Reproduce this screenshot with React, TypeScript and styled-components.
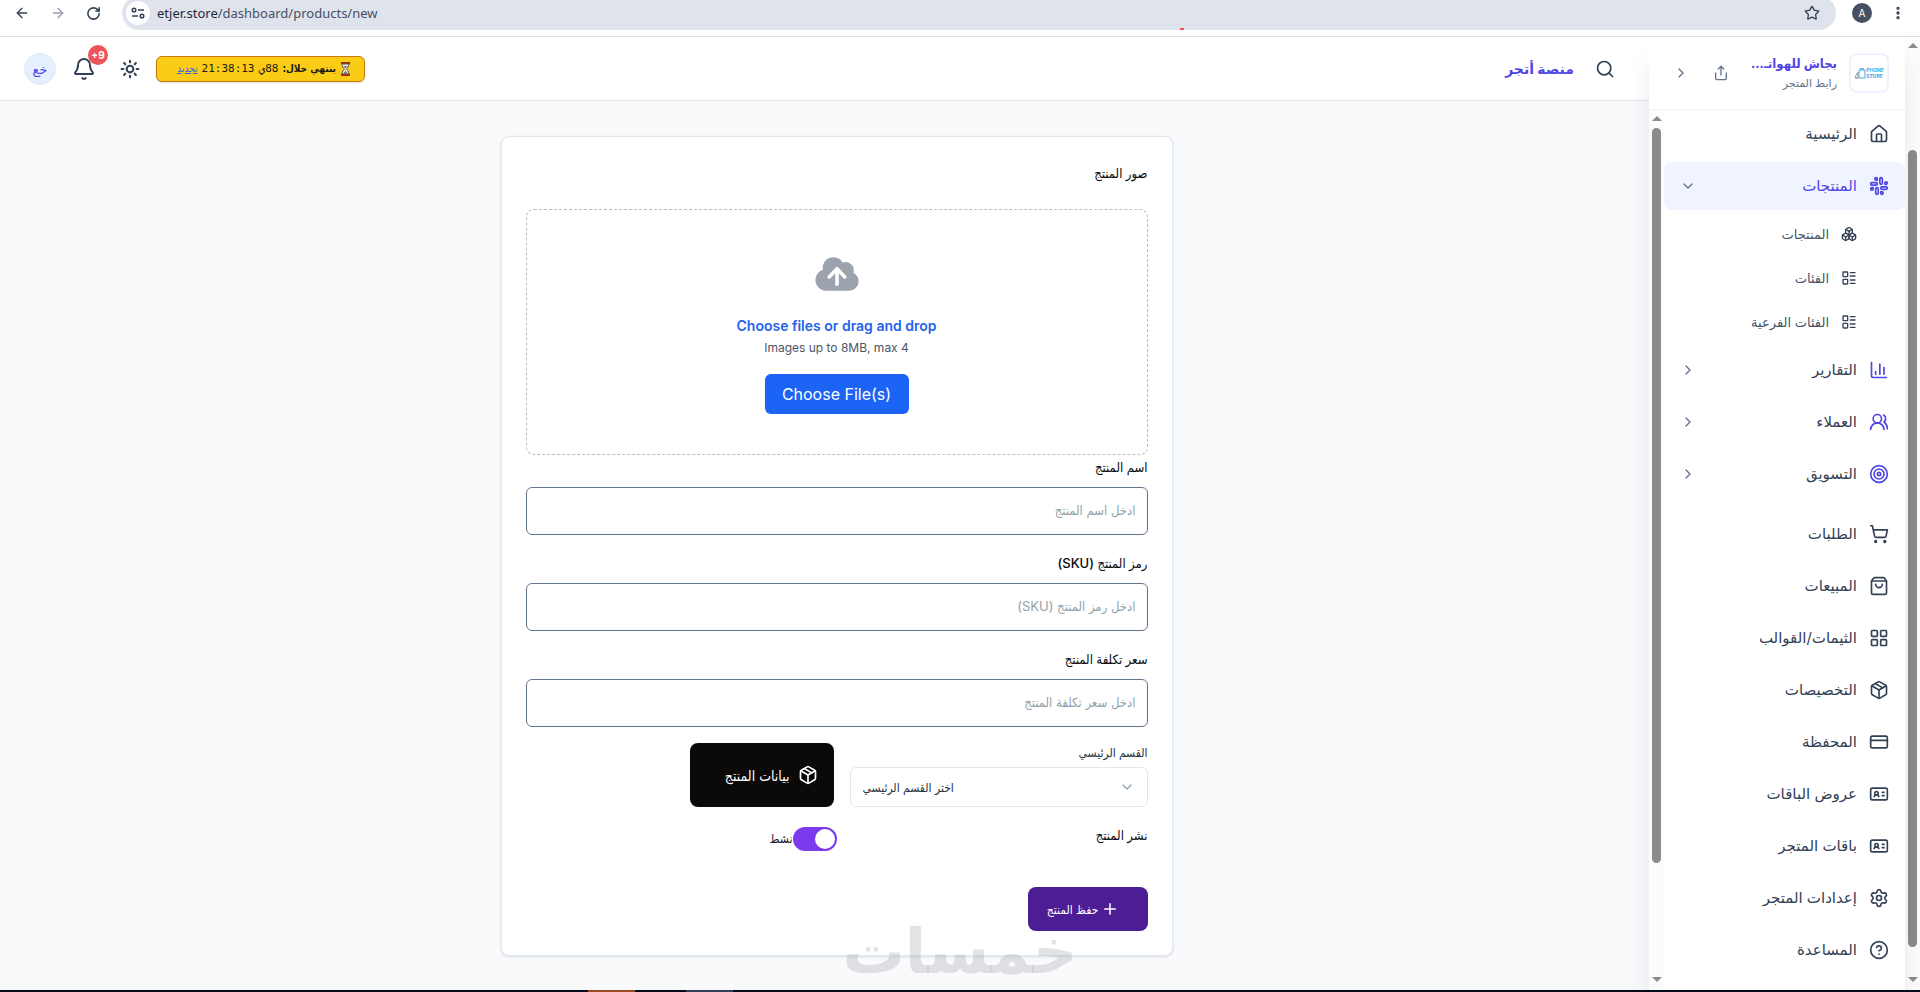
import React from "react";
import styled, { createGlobalStyle, css } from "styled-components";
import {
  ArrowLeft, ArrowRight, RotateCw, Star, EllipsisVertical, Bell, Sun, Search, Share, ChevronRight, ChevronDown,
  House, Slack, Boxes, LayoutList, ChartColumn, UsersRound, Target, ShoppingCart, ShoppingBag, LayoutGrid,
  Package, CreditCard, IdCard, Settings, CircleQuestionMark, Plus,
} from "lucide-react";

const ink = "#334155";
const brand = "#4f46e5";
const bodyFont = `Inter, "DejaVu Sans", sans-serif`;
const formFont = `Inter, "DejaVu Sans Condensed", "DejaVu Sans", sans-serif`;

const GlobalStyle = createGlobalStyle`
  *, *::before, *::after { box-sizing: border-box; }
  body { margin: 0; background: #f8fafc; font-family: ${bodyFont}; color: #0f172a; }
  button, input, select { font: inherit; }
  button { border: 0; background: none; padding: 0; cursor: pointer; color: inherit; }
  a { color: inherit; text-decoration: none; }
  svg { display: block; flex: none; }
`;

const Page = styled.div`
  position: relative;
  min-height: 100vh;
  display: flex;
  flex-direction: column;
`;

/* Browser toolbar */
const Toolbar = styled.div`
  direction: ltr;
  height: 37px;
  overflow: hidden;
  background: #fff;
  border-bottom: 1px solid #dcdee2;
`;
const ToolbarRow = styled.div`
  height: 34px;
  margin-top: -4px;
  display: flex;
  align-items: center;
  color: ${ink};
  padding: 0 14px 0 14px;
`;
const ToolButton = styled.button<{ $dim?: boolean }>`
  width: 17px;
  margin-right: 19px;
  color: ${(p) => (p.$dim ? "#9aa1ac" : ink)};
`;
const Omnibox = styled.div`
  position: relative;
  flex: 1;
  height: 34px;
  margin-right: 16px;
  padding: 0 16px 0 4px;
  display: flex;
  align-items: center;
  gap: 7px;
  border-radius: 17px;
  background: #dfe3ec;
  &::after {
    content: "";
    position: absolute;
    right: 652px;
    bottom: 0;
    width: 4px;
    height: 2px;
    background: #f05252;
  }
`;
const SiteInfo = styled.button`
  width: 24px;
  height: 24px;
  display: grid;
  place-items: center;
  border-radius: 50%;
  background: #fff;
`;
const Address = styled.span`
  flex: 1;
  font: 13px/20px "Noto Sans", sans-serif;
  color: #475063;
  b { font-weight: 400; color: #1f2937; }
`;
const Profile = styled.button`
  width: 20px;
  height: 20px;
  margin-right: 18px;
  border-radius: 50%;
  background: #475063;
  color: #fff;
  font: 10px/20px Inter, sans-serif;
`;

/* Shell */
const Shell = styled.div`
  flex: 1;
  display: flex;
`;
const Track = styled.div`
  width: 15px;
  flex: none;
  display: flex;
  flex-direction: column;
  align-items: center;
  padding: 6px 0 8px;
  background: #fcfcfa;
`;
const Arrow = styled.span<{ $down?: boolean }>`
  border: 5px solid transparent;
  border-top-width: ${(p) => (p.$down ? 5 : 0)}px;
  border-bottom-width: ${(p) => (p.$down ? 0 : 5)}px;
  ${(p) => (p.$down ? "border-top-color" : "border-bottom-color")}: #8b8b8b;
`;
const Thumb = styled.div<{ $before: number; $after: number }>`
  width: 9px;
  flex: 1;
  margin: ${(p) => p.$before}px 0 ${(p) => p.$after}px;
  border-radius: 5px;
  background: #8b8b8b;
`;

/* Sidebar */
const Sidebar = styled.aside`
  position: relative;
  z-index: 1;
  width: 256px;
  flex: none;
  display: flex;
  flex-direction: column;
  background: #fff;
  box-shadow: 0 20px 25px -5px rgba(15, 23, 42, 0.12);
`;
const StoreHead = styled.div`
  height: 73px;
  display: flex;
  align-items: center;
  padding: 0 16px 0 24px;
  border-bottom: 1px solid #f1f5f9;
  color: #64748b;
`;
const StoreLogo = styled.div`
  width: 40px;
  height: 40px;
  flex: none;
  display: flex;
  align-items: center;
  justify-content: center;
  direction: ltr;
  border: 2px solid #eef2ff;
  border-radius: 8px;
  font: 700 5px/6px Inter, sans-serif;
  color: #38a9e8;
`;
const StoreText = styled.div`
  margin-right: 12px;
`;
const StoreName = styled.div`
  font-size: 13px;
  line-height: 20px;
  font-weight: 700;
  font-family: ${formFont};
  color: ${brand};
  white-space: nowrap;
`;
const StoreLink = styled.a`
  display: block;
  font-size: 11px;
  line-height: 20px;
`;
const HeadTools = styled.div`
  display: flex;
  gap: 24px;
  margin-right: auto;
`;
const NavArea = styled.div`
  flex: 1;
  display: flex;
`;
const Nav = styled.nav`
  flex: 1;
  display: flex;
  flex-direction: column;
  gap: 4px;
  padding: 0 0 16px;
`;
const NavItem = styled.a<{ $sub?: boolean; $active?: boolean; $accent?: boolean; $spaced?: boolean }>`
  height: 48px;
  display: flex;
  align-items: center;
  gap: 12px;
  padding: 0 16px;
  border-radius: 8px;
  color: ${(p) => (p.$active ? brand : ink)};
  background: ${(p) => (p.$active ? "#f0f4ff" : "transparent")};
  font-size: 15px;
  line-height: 24px;
  margin-top: ${(p) => (p.$spaced ? 8 : 0)}px;
  > svg:first-child { color: ${(p) => (p.$accent || p.$active ? brand : ink)}; }
  > svg:last-child { color: #64748b; }
  span { flex: 1; }
  ${(p) =>
    p.$sub &&
    css`
      height: 40px;
      padding-right: 48px;
      font-size: 13px;
      color: #475569;
      > svg:first-child { color: ${ink}; }
    `}
`;

/* Content */
const Content = styled.div`
  flex: 1;
  min-width: 0;
`;
const TopBar = styled.header`
  height: 64px;
  display: flex;
  align-items: center;
  padding: 0 34px 0 24px;
  background: #fff;
  border-bottom: 1px solid #e2e8f0;
  color: ${ink};
`;
const SiteTitle = styled.a`
  margin-right: 21px;
  margin-left: auto;
  font-size: 14px;
  line-height: 24px;
  font-weight: 700;
  color: ${brand};
`;
const Renewal = styled.div`
  height: 26px;
  width: 209px;
  display: flex;
  align-items: center;
  gap: 4px;
  padding-right: 13px;
  border: 1px solid #c9780a;
  border-radius: 6px;
  background: #facc15;
  color: #1c1917;
  font: 11px/16px "DejaVu Sans Mono", monospace;
  box-shadow: 0 1px 2px rgba(0, 0, 0, 0.12);
  white-space: nowrap;
  b, a { font-family: "DejaVu Sans Condensed", "DejaVu Sans", sans-serif; font-size: 10px; }
  a { color: #2563eb; text-decoration: underline; }
`;
const IconButton = styled.button<{ $gap: number }>`
  position: relative;
  margin-right: ${(p) => p.$gap}px;
`;
const Badge = styled.span`
  position: absolute;
  top: -12px;
  left: 16px;
  width: 20px;
  height: 20px;
  border-radius: 50%;
  background: #f0525a;
  color: #fff;
  direction: ltr;
  font: 700 10px/20px Inter, sans-serif;
`;
const Avatar = styled.button`
  width: 32px;
  height: 32px;
  margin-right: 16px;
  border-radius: 50%;
  border: 1px solid #e2e8f0;
  background: #e6effd;
  color: ${brand};
  font-size: 13px;
`;
const Main = styled.main`
  padding: 35px 0 34px 24px;
`;
const Card = styled.form`
  max-width: 672px;
  margin: 0 auto;
  padding: 24px;
  border: 1px solid #e2e8f0;
  border-radius: 8px;
  background: #fff;
  box-shadow: 0 1px 3px rgba(15, 23, 42, 0.12);
  font-family: ${formFont};
`;
const Caption = styled.label<{ $quiet?: boolean }>`
  display: block;
  width: fit-content;
  font-size: ${(p) => (p.$quiet ? 12 : 13)}px;
  line-height: ${(p) => (p.$quiet ? 20 : 24)}px;
  margin-bottom: ${(p) => (p.$quiet ? 4 : 0)}px;
  font-weight: 500;
  color: ${(p) => (p.$quiet ? "#27303f" : "#09090b")};
`;
const DropZone = styled.div`
  direction: ltr;
  margin-top: 24px;
  padding: 40px 0;
  display: flex;
  flex-direction: column;
  align-items: center;
  border: 1px dashed #b9bdc6;
  border-radius: 8px;
  color: #9ca3af;
`;
const DropTitle = styled.label`
  margin-top: 16px;
  font: 600 14px/24px Inter, sans-serif;
  color: #2563eb;
`;
const DropHint = styled.span`
  font: 12px/20px Inter, sans-serif;
  color: #4b5563;
`;
const ChooseButton = styled.button`
  width: 144px;
  height: 40px;
  margin-top: 16px;
  border-radius: 6px;
  background: #1b64f5;
  color: #fff;
  font: 400 16px/24px Inter, sans-serif;
`;
const Field = styled.div`
  margin-bottom: 16px;
`;
const TextInput = styled.input`
  display: block;
  width: 100%;
  height: 48px;
  margin-top: 8px;
  padding: 0 11px 2px;
  border: 1px solid #64748b;
  border-radius: 6px;
  background: #fff;
  font-size: 13px;
  &::placeholder { color: #94a3a8; opacity: 1; }
`;
const CategoryRow = styled.div`
  display: flex;
  gap: 16px;
`;
const CategoryField = styled.div`
  flex: 0 1 298px;
`;
const SelectBox = styled.div`
  display: grid;
  direction: ltr;
  align-items: center;
  color: #94a3b8;
  > * { grid-area: 1 / 1; }
  svg { justify-self: end; margin-right: 13px; pointer-events: none; }
`;
const Select = styled.select`
  appearance: none;
  width: 100%;
  height: 40px;
  padding: 0 12px;
  border: 1px solid #e2e8f0;
  border-radius: 6px;
  background: #fff;
  color: #27303f;
  font-size: 12px;
`;
const DataButton = styled.button`
  width: 144px;
  height: 64px;
  display: flex;
  align-items: center;
  gap: 8px;
  padding-right: 16px;
  border-radius: 8px;
  background: #0c0a09;
  color: #fff;
  font-size: 14px;
`;
const PublishRow = styled.div`
  display: grid;
  grid-template-columns: 1fr 1fr;
  margin: 16px 0 36px;
`;
const Toggle = styled.label`
  display: flex;
  align-items: center;
  padding-top: 4px;
  font-size: 12px;
  line-height: 24px;
  input {
    appearance: none;
    width: 44px;
    height: 24px;
    margin: 0;
    padding: 2px;
    border-radius: 12px;
    background: #7c3aed;
  }
  input::before {
    content: "";
    display: block;
    width: 20px;
    height: 20px;
    border-radius: 50%;
    background: #fff;
  }
`;
const SaveButton = styled.button`
  width: 120px;
  height: 44px;
  display: flex;
  align-items: center;
  gap: 2px;
  padding-right: 29px;
  border-radius: 8px;
  background: #4c1d95;
  color: #fff;
  font-size: 12px;
  white-space: nowrap;
`;
const Watermark = styled.div`
  position: absolute;
  z-index: 2;
  left: 50%;
  bottom: 16px;
  transform: translateX(-50%);
  font: 700 62px/48px "DejaVu Sans", sans-serif;
  color: rgba(165, 168, 172, 0.32);
  pointer-events: none;
`;

/* Desktop task bar edge */
const TaskBar = styled.div`
  direction: ltr;
  height: 2px;
  display: flex;
  gap: 51px;
  padding-left: 588px;
  background: #050b18;
`;
const Task = styled.span<{ $color: string }>`
  width: 47px;
  background: ${(p) => p.$color};
`;

type Entry = { label: string; icon: React.ElementType; kind?: "active" | "sub" | "group"; spaced?: boolean };
const entries: Entry[] = [
  { label: "الرئيسية", icon: House },
  { label: "المنتجات", icon: Slack, kind: "active" },
  { label: "المنتجات", icon: Boxes, kind: "sub" },
  { label: "الفئات", icon: LayoutList, kind: "sub" },
  { label: "الفئات الفرعية", icon: LayoutList, kind: "sub" },
  { label: "التقارير", icon: ChartColumn, kind: "group" },
  { label: "العملاء", icon: UsersRound, kind: "group" },
  { label: "التسويق", icon: Target, kind: "group" },
  { label: "الطلبات", icon: ShoppingCart, spaced: true },
  { label: "المبيعات", icon: ShoppingBag },
  { label: "الثيمات/القوالب", icon: LayoutGrid },
  { label: "التخصيصات", icon: Package },
  { label: "المحفظة", icon: CreditCard },
  { label: "عروض الباقات", icon: IdCard },
  { label: "باقات المتجر", icon: IdCard },
  { label: "إعدادات المتجر", icon: Settings },
  { label: "المساعدة", icon: CircleQuestionMark },
];

const fields = [
  { id: "name", label: "اسم المنتج", hint: "ادخل اسم المنتج" },
  { id: "sku", label: "رمز المنتج (SKU)", hint: "ادخل رمز المنتج (SKU)" },
  { id: "cost", label: "سعر تكلفة المنتج", hint: "ادخل سعر تكلفة المنتج" },
];

const Tune = () => (
  <svg width="14" height="14" viewBox="0 0 14 14" fill="none" stroke={ink} strokeWidth="1.500">
    <circle cx="3" cy="4" r="1.800" /><path d="M7 4h6M1 10h6" /><circle cx="11" cy="10" r="1.800" />
  </svg>
);
const Hourglass = () => (
  <svg width="11" height="14" viewBox="0 0 11 14">
    <path d="M2 2h7c0 3-2 4-2.500 5C7 8 9 9 9 12H2c0-3 2-4 2.500-5C4 6 2 5 2 2z" fill="#f4efe6" stroke="#57534e" />
    <path d="M3.500 4h4L5.500 6.500zM5.500 8.500L8 12H3z" fill="#78716c" />
    <path d="M1 1h9M1 13h9" stroke="#9a3412" strokeWidth="2" />
  </svg>
);
const CloudUp = () => (
  <svg width="48" height="48" viewBox="0 0 20 20" fill="currentColor">
    <path fillRule="evenodd" clipRule="evenodd" d="M5.500 17a4.500 4.500 0 0 1-1.440-8.765a4.500 4.500 0 0 1 8.302-3.046a3.500 3.500 0 0 1 4.504 4.272A4 4 0 0 1 15 17H5.500Zm3.750-2.750a.75.75 0 0 0 1.500 0V9.660l1.950 2.100a.75.75 0 1 0 1.100-1.020l-3.250-3.500a.75.75 0 0 0-1.100 0l-3.250 3.500a.75.75 0 1 0 1.100 1.020l1.950-2.100v4.590Z" />
  </svg>
);
const PhoneBag = () => (
  <svg width="12" height="12" viewBox="0 0 12 12" fill="none">
    <path d="M5 3h6v8H5z" stroke="#4aa8dc" />
    <path d="M6.500 3V1.500h3V3" stroke="#4aa8dc" />
    <path d="M1 10l3-5v6zM1 11h3" stroke="#8b98a5" />
  </svg>
);

export default function App() {
  return (
    <Page dir="rtl">
      <GlobalStyle />
      <Toolbar>
        <ToolbarRow>
          <ToolButton aria-label="Back"><ArrowLeft size={16} /></ToolButton>
          <ToolButton aria-label="Forward" $dim><ArrowRight size={16} /></ToolButton>
          <ToolButton aria-label="Reload"><RotateCw size={15} strokeWidth={2.5} /></ToolButton>
          <Omnibox>
            <SiteInfo aria-label="Site information"><Tune /></SiteInfo>
            <Address><b>etjer.store</b>/dashboard/products/new</Address>
            <Star size={16} />
          </Omnibox>
          <Profile>A</Profile>
          <EllipsisVertical size={16} strokeWidth={3} />
        </ToolbarRow>
      </Toolbar>

      <Shell>
        <Track>
          <Arrow />
          <Thumb $before={102} $after={30} />
          <Arrow $down />
        </Track>

        <Sidebar>
          <StoreHead>
            <StoreLogo>
              <PhoneBag />
              <div>PHONE<br />STORE</div>
            </StoreLogo>
            <StoreText>
              <StoreName>بجاش للهواتـ...</StoreName>
              <StoreLink href="#store">رابط المتجر</StoreLink>
            </StoreText>
            <HeadTools>
              <button type="button" aria-label="مشاركة"><Share size={16} strokeWidth={2} /></button>
              <button type="button" aria-label="طي"><ChevronRight size={16} /></button>
            </HeadTools>
          </StoreHead>
          <NavArea>
            <Nav>
              {entries.map(({ label, icon: Icon, kind, spaced }, i) => (
                <NavItem key={i} href="#nav" $active={kind === "active"} $sub={kind === "sub"} $accent={kind === "group"} $spaced={spaced}>
                  <Icon size={kind === "sub" ? 16 : 20} strokeWidth={2} />
                  <span>{label}</span>
                  {kind === "active" && <ChevronDown size={16} />}
                  {kind === "group" && <ChevronRight size={16} />}
                </NavItem>
              ))}
            </Nav>
            <Track>
              <Arrow />
              <Thumb $before={7} $after={114} />
              <Arrow $down />
            </Track>
          </NavArea>
        </Sidebar>

        <Content>
          <TopBar>
            <Search size={20} strokeWidth={2} />
            <SiteTitle href="#home">منصة أتجر</SiteTitle>
            <Renewal>
              <Hourglass />
              <b>ينتهي خلال:</b>
              <span>88ي</span>
              <span>21:38:13</span>
              <a href="#renew">تجديد</a>
            </Renewal>
            <IconButton type="button" aria-label="المظهر" $gap={16}><Sun size={20} strokeWidth={2.5} /></IconButton>
            <IconButton type="button" aria-label="الإشعارات" $gap={24}>
              <Bell size={24} strokeWidth={2} />
              <Badge>+9</Badge>
            </IconButton>
            <Avatar type="button">خع</Avatar>
          </TopBar>

          <Main>
            <Card>
              <Caption htmlFor="images">صور المنتج</Caption>
              <DropZone>
                <CloudUp />
                <DropTitle htmlFor="images">Choose files or drag and drop</DropTitle>
                <DropHint>Images up to 8MB, max 4</DropHint>
                <ChooseButton type="button" id="images">Choose File(s)</ChooseButton>
              </DropZone>
              {fields.map((f) => (
                <Field key={f.id}>
                  <Caption htmlFor={f.id}>{f.label}</Caption>
                  <TextInput id={f.id} placeholder={f.hint} />
                </Field>
              ))}
              <CategoryRow>
                <CategoryField>
                  <Caption htmlFor="category" $quiet>القسم الرئيسي</Caption>
                  <SelectBox>
                    <Select id="category">
                      <option>اختر القسم الرئيسي</option>
                    </Select>
                    <ChevronDown size={16} />
                  </SelectBox>
                </CategoryField>
                <DataButton type="button">
                  <Package size={20} />
                  بيانات المنتج
                </DataButton>
              </CategoryRow>
              <PublishRow>
                <Caption htmlFor="publish">نشر المنتج</Caption>
                <Toggle>
                  <input id="publish" type="checkbox" defaultChecked />
                  نشط
                </Toggle>
              </PublishRow>
              <SaveButton type="submit">
                <Plus size={18} />
                حفظ المنتج
              </SaveButton>
            </Card>
          </Main>
        </Content>
      </Shell>
      <Watermark>خمسات</Watermark>
      <TaskBar>
        <Task $color="#9a4a20" />
        <Task $color="#334059" />
      </TaskBar>
    </Page>
  );
}
